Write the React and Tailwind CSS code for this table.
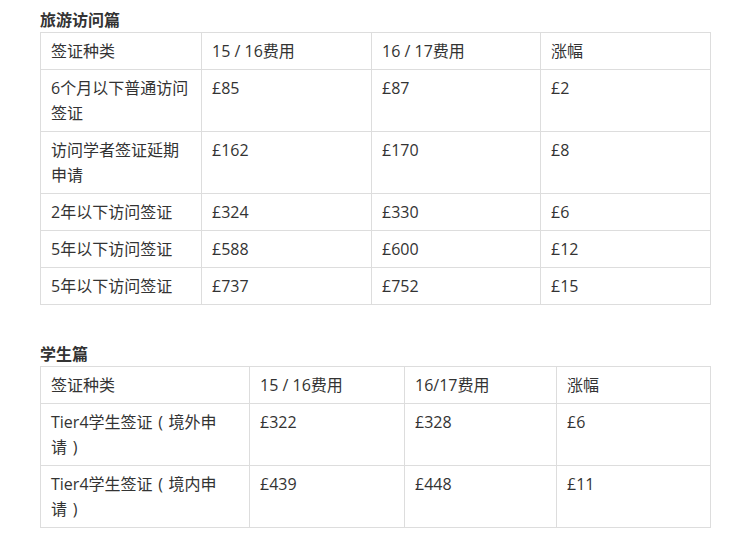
const visitRows = [
  ['签证种类', '15 / 16费用', '16 / 17费用', '涨幅'],
  ['6个月以下普通访问签证', '£85', '£87', '£2'],
  ['访问学者签证延期申请', '£162', '£170', '£8'],
  ['2年以下访问签证', '£324', '£330', '£6'],
  ['5年以下访问签证', '£588', '£600', '£12'],
  ['5年以下访问签证', '£737', '£752', '£15'],
]

const studentRows = [
  ['签证种类', '15 / 16费用', '16/17费用', '涨幅'],
  ['Tier4学生签证（境外申请）', '£322', '£328', '£6'],
  ['Tier4学生签证（境内申请）', '£439', '£448', '£11'],
]

// full-width parens drawn centred in their em box, like the original font does.
// the closing one stays glued to the char before it so it never starts a line
function Cell({ text }) {
  const parts = text.split(/(.?）|（)/)
  return parts.map((p, i) => {
    if (p === '（') {
      return (
        <span key={i} className="inline-block w-[16px] text-center">
          (
        </span>
      )
    }
    if (p.endsWith('）')) {
      return (
        <span key={i} className="whitespace-nowrap">
          {p.slice(0, -1)}
          <span className="inline-block w-[16px] text-center">)</span>
        </span>
      )
    }
    return p
  })
}

function FeeTable({ rows, widths }) {
  return (
    <table className="w-[670px] table-fixed border-collapse">
      <colgroup>
        {widths.map((w, i) => (
          <col key={i} style={{ width: w }} />
        ))}
      </colgroup>
      <tbody>
        {rows.map((row, r) => (
          <tr key={r}>
            {row.map((cell, c) => (
              <td
                key={c}
                className="border border-[#ddd] px-[10px] py-[5.5px] align-top text-[16px] leading-[25px] text-[#333]"
              >
                <Cell text={cell} />
              </td>
            ))}
          </tr>
        ))}
      </tbody>
    </table>
  )
}

export default function App() {
  return (
    <div
      className="min-h-[544px] w-[737px] bg-white pl-[40px]"
      style={{ fontFamily: '"Open Sans", "Noto Sans CJK SC", sans-serif' }}
    >
      <h2 className="pt-[8px] text-[16px] font-bold leading-[24px] text-[#333]">旅游访问篇</h2>
      <FeeTable rows={visitRows} widths={[161, 170, 169, 170]} />
      <h2 className="mt-[37px] text-[16px] font-bold leading-[24px] text-[#333]">学生篇</h2>
      <FeeTable rows={studentRows} widths={[209, 155, 152, 154]} />
    </div>
  )
}
